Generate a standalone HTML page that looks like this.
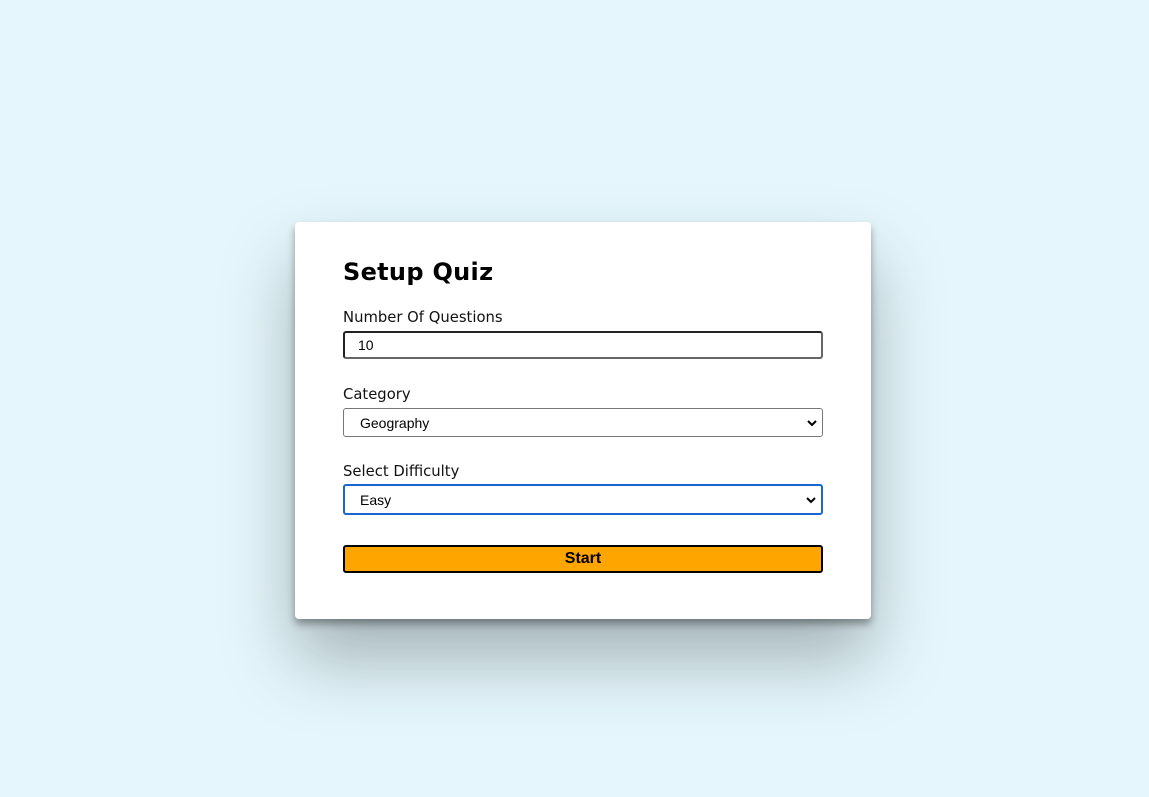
<!DOCTYPE html>
<html><head><style>
html,body{margin:0;padding:0;width:1149px;height:797px;background:#e5f7fc;overflow:hidden;font-family:"Liberation Sans",sans-serif}
.card{position:absolute;left:295px;top:222px;width:576px;height:397px;background:#fff;border-radius:4px;box-shadow:0 5px 8px rgba(0,0,0,.35),0 40px 70px rgba(40,50,55,.35)}
.t{position:absolute;left:48px;font-family:"DejaVu Sans","Liberation Sans",sans-serif;color:#111}
h1{position:absolute;left:48px;top:36px;margin:0;font-size:24px;font-weight:bold;letter-spacing:0.3px;font-family:"DejaVu Sans",sans-serif;color:#000}
.lab{font-size:14.8px}
.box{position:absolute;left:48px;width:480px;box-sizing:border-box;background:#fff;font-size:14px;color:#000}
.box span{position:absolute;left:16px;top:50%;transform:translateY(-50%)}
.chev{position:absolute;right:5px;top:50%;margin-top:-4px}
</style></head><body>
<div class="card">
<h1>Setup Quiz</h1>
<div class="t lab" style="top:87px">Number Of Questions</div>
<div class="box" style="top:109px;height:28px;border:2px solid #222;border-radius:3px;border-right-color:#666;border-bottom-color:#666"><span style="left:13px">10</span></div>
<div class="t lab" style="top:164px">Category</div>
<div class="box" style="top:186px;height:29px;border:1px solid #777;border-radius:3px"><span>Geography</span><svg class="chev" width="10" height="8" viewBox="0 0 10 8"><path d="M1 2l4 4 4-4" fill="none" stroke="#000" stroke-width="2"/></svg></div>
<div class="t lab" style="top:241px">Select Difficulty</div>
<div class="box" style="top:262px;height:31px;border:2px solid #1a66d0;border-radius:3px"><span style="left:15px">Easy</span><svg class="chev" width="10" height="8" viewBox="0 0 10 8"><path d="M1 2l4 4 4-4" fill="none" stroke="#000" stroke-width="2"/></svg></div>
<div class="box" style="top:323px;height:28px;border:2px solid #000;border-radius:3px;background:#ffa500;text-align:center;font-weight:bold;font-size:16px;line-height:24px">Start</div>
</div>
</body></html>
